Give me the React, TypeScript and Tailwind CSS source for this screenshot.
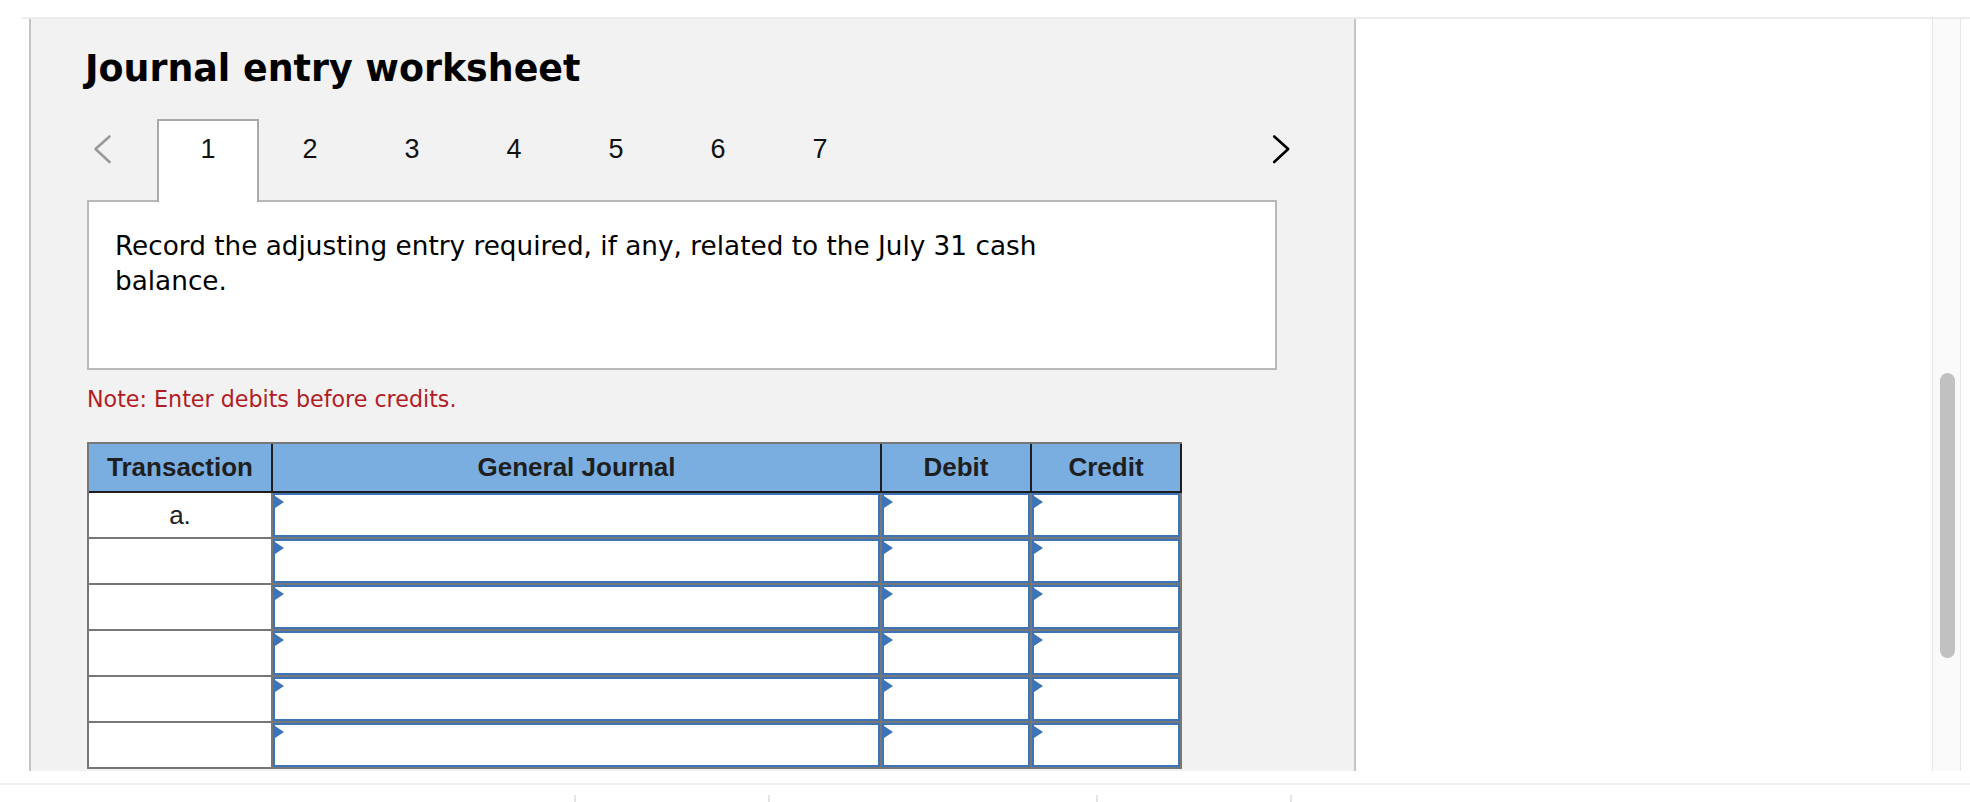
import React from "react";

const BLUE = "border-[#3c74b9]";

function InputCell({ w }: { w: string }) {
  return (
    <div className={`${w} h-full border-r-2 border-[#777777]`}>
      <div className={`relative h-full w-full border-2 ${BLUE} bg-white`}>
        <div className="absolute left-0 top-[1px] h-0 w-0 border-y-[6px] border-y-transparent border-l-[9px] border-l-[#3c74b9]" />
      </div>
    </div>
  );
}

function Row({ label }: { label?: string }) {
  return (
    <div className="flex h-[46px] border-b-2 border-[#777777]">
      <div className="w-[184px] h-full border-r-2 border-[#777777] bg-white text-center text-[26px] leading-[44px] text-[#222222] font-['Liberation_Sans',Arial,sans-serif]">
        {label ?? ""}
      </div>
      <InputCell w="w-[609px]" />
      <InputCell w="w-[150px]" />
      <InputCell w="w-[150px]" />
    </div>
  );
}

export default function App() {
  const tabs = ["1", "2", "3", "4", "5", "6", "7"];
  const sans = "font-['DejaVu_Sans',Verdana,sans-serif]";
  return (
    <div className="w-[1970px] h-[802px] bg-white overflow-hidden">
      <div className="pt-[17px]">
        <div className="ml-[22px] flex h-[754px] border-t-2 border-[#ececec]">
          <div className="w-[7px] h-full bg-white" />
          <div className="w-[1327px] h-full border-x-2 border-[#c4c4c4] bg-[#f2f2f2] overflow-hidden pl-[56px] pt-[31.5px]">
            <h1 className="-ml-[2px] text-[36.4px] leading-[36px] font-bold text-black font-['DejaVu_Sans',Verdana,sans-serif]">
              Journal entry worksheet
            </h1>

            <div className="relative z-10 mt-[32.5px] -mb-[2px] flex h-[83px] items-start">
              <div className="w-[70px] h-full">
                <svg className="ml-[5px] mt-[14px]" width="20" height="32" viewBox="0 0 20 32">
                  <polyline points="17.5,3.5 3.5,16 17.5,29" fill="none" stroke="#9a9a9a" strokeWidth="2.6" strokeLinecap="round" strokeLinejoin="round" />
                </svg>
              </div>
              {tabs.map((t, i) => (
                <div
                  key={t}
                  className={`w-[102px] h-full border-2 border-b-0 pt-[15px] text-center text-[27px] leading-[27px] text-[#111111] font-['Liberation_Sans',Arial,sans-serif] ${
                    i === 0 ? "border-[#a9a9a9] bg-white" : "border-transparent"
                  }`}
                >
                  {t}
                </div>
              ))}
              <svg className="ml-[400px] mt-[14px]" width="20" height="32" viewBox="0 0 20 32">
                <polyline points="3.2,3.5 17.2,16 3.2,29" fill="none" stroke="#000000" strokeWidth="2.6" strokeLinecap="round" strokeLinejoin="round" />
              </svg>
            </div>

            <div className={`w-[1190px] h-[170px] border-2 border-[#b9b9b9] bg-white pl-[26px] pt-[27px] text-[26.3px] leading-[35px] text-black ${sans}`}>
              Record the adjusting entry required, if any, related to the July 31 cash
              <br />
              balance.
            </div>

            <p className={`mt-[16.4px] text-[22.2px] leading-[26px] text-[#b21c26] ${sans}`}>
              Note: Enter debits before credits.
            </p>

            <div className="mt-[29.6px] w-[1095px] border-l-2 border-t-2 border-[#777777]">
              <div className="flex h-[49px] border-b-2 border-[#1e1e1e] bg-[#7aade0] text-center text-[26px] leading-[47px] font-bold text-[#1f1f1f] font-['Liberation_Sans',Arial,sans-serif]">
                <div className="w-[184px] border-r-2 border-[#1e1e1e]">Transaction</div>
                <div className="w-[609px] border-r-2 border-[#1e1e1e]">General Journal</div>
                <div className="w-[150px] border-r-2 border-[#1e1e1e]">Debit</div>
                <div className="w-[150px] border-r-2 border-[#1e1e1e]">Credit</div>
              </div>
              <Row label="a." />
              <Row />
              <Row />
              <Row />
              <Row />
              <Row />
            </div>
          </div>
          <div className="w-[576px] h-full bg-white" />
          <div className="w-[29px] h-full border-x border-[#e6e6e6] bg-[#fafafa] pt-[354px] pl-[7px]">
            <div className="w-[15px] h-[285px] rounded-full bg-[#c1c1c1]" />
          </div>
        </div>
        <div className="mt-[12px] h-[2px] w-full bg-[#efefef]" />
        <div className="mt-[10px] flex h-[7px]">
          <div className="w-[574px]" />
          <div className="w-[2px] bg-[#e3e3e3]" />
          <div className="w-[192px]" />
          <div className="w-[2px] bg-[#e3e3e3]" />
          <div className="w-[326px]" />
          <div className="w-[2px] bg-[#e3e3e3]" />
          <div className="w-[192px]" />
          <div className="w-[2px] bg-[#e3e3e3]" />
        </div>
      </div>
    </div>
  );
}
